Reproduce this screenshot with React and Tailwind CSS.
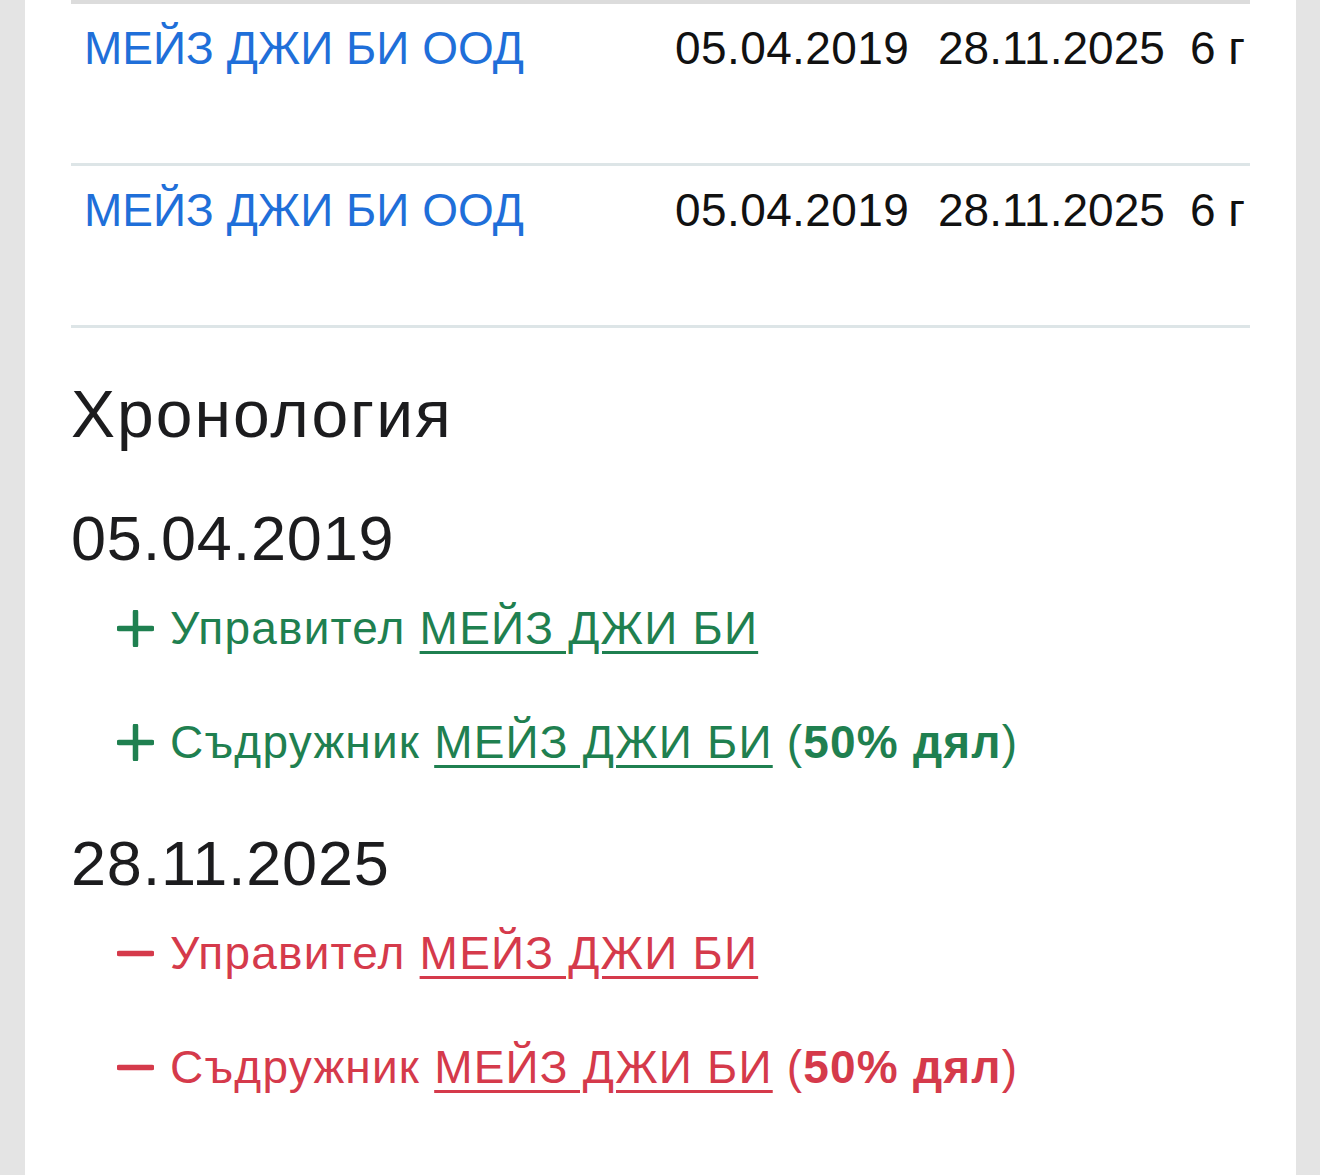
import React from 'react'

const rows = [
  { name: 'МЕЙЗ ДЖИ БИ ООД', from: '05.04.2019', to: '28.11.2025', span: '6 г' },
  { name: 'МЕЙЗ ДЖИ БИ ООД', from: '05.04.2019', to: '28.11.2025', span: '6 г' },
]

const timeline = [
  {
    date: '05.04.2019',
    kind: 'add',
    items: [
      { role: 'Управител', who: 'МЕЙЗ ДЖИ БИ' },
      { role: 'Съдружник', who: 'МЕЙЗ ДЖИ БИ', share: '50% дял' },
    ],
  },
  {
    date: '28.11.2025',
    kind: 'remove',
    items: [
      { role: 'Управител', who: 'МЕЙЗ ДЖИ БИ' },
      { role: 'Съдружник', who: 'МЕЙЗ ДЖИ БИ', share: '50% дял' },
    ],
  },
]

function Sign({ kind }) {
  return (
    <svg width="37" height="37" viewBox="0 0 37 37" className="shrink-0">
      <line x1="2" y1="18.5" x2="35" y2="18.5" stroke="currentColor" strokeWidth="5.5" strokeLinecap="round" />
      {kind === 'add' && (
        <line x1="18.5" y1="2" x2="18.5" y2="35" stroke="currentColor" strokeWidth="5.5" strokeLinecap="round" />
      )}
    </svg>
  )
}

export default function App() {
  return (
    <div lang="bg" className="min-h-screen bg-[#e4e4e4] pl-[25px] pr-[24px] font-['Liberation_Sans',Arial,sans-serif]">
      <div className="bg-white min-h-[1175px] px-[46px]">
        {/* related companies table */}
        <div className="overflow-hidden border-t-4 border-[#dcdcdc]">
          {rows.map((r, i) => (
            <div key={i} className="flex h-[162px] items-start border-b-[3px] border-[#dde5e7] pt-[14px] text-[46px] leading-[60px] whitespace-nowrap">
              <div className="w-[604px] shrink-0 pl-[13px] text-[#1f6fd9]">{r.name}</div>
              <div className="w-[263px] shrink-0 tracking-[0.4px] text-[#111]">{r.from}</div>
              <div className="w-[252px] shrink-0 text-[#111]">{r.to}</div>
              <div className="shrink-0 text-[#111]">{r.span}</div>
            </div>
          ))}
        </div>

        <h2 className="mt-[48px] mb-[50px] text-[66px] leading-[76px] tracking-[2px] text-[#1c1c1e]">Хронология</h2>

        <div className="flex flex-col gap-[57px]">
          {timeline.map((g) => {
            const color = g.kind === 'add' ? 'text-[#1f8050]' : 'text-[#d53a4b]'
            return (
              <div key={g.date}>
                <div className="text-[63px] leading-[72px] tracking-[0.8px] text-[#1c1c1e]">{g.date}</div>
                <div className={`flex flex-col gap-[58px] pl-[46px] pt-[26px] ${color}`}>
                  {g.items.map((it, i) => (
                    <div key={i} className="flex items-center gap-[16px] text-[46px] leading-[56px] tracking-[1.2px] whitespace-nowrap">
                      <Sign kind={g.kind} />
                      <span>
                        {it.role}{' '}
                        <a className="underline decoration-[3px] underline-offset-[7px]">{it.who}</a>
                        {it.share && (
                          <>
                            {' '}(<b className="font-bold">{it.share}</b>)
                          </>
                        )}
                      </span>
                    </div>
                  ))}
                </div>
              </div>
            )
          })}
        </div>
      </div>
    </div>
  )
}
